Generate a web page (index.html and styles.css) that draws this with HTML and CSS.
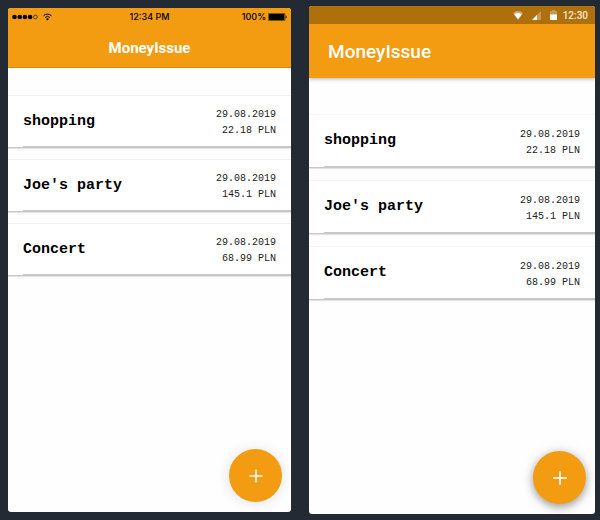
FILE: index.html
```html
<!DOCTYPE html>
<html lang="en">
<head>
<meta charset="utf-8">
<meta name="viewport" content="width=device-width, initial-scale=1">
<title>MoneyIssue</title>
<link rel="stylesheet" href="styles.css">
</head>
<body>
<main class="stage">
  <section class="phone ios" aria-label="iOS">
    <header class="bar">
      <div class="status">
        <span class="status-left">
          <svg width="27" height="6" viewBox="0 0 27 6" aria-hidden="true"><circle cx="2.5" cy="3" r="2.3"/><circle cx="7.7" cy="3" r="2.3"/><circle cx="12.9" cy="3" r="2.3"/><circle cx="18.1" cy="3" r="2.3"/><circle cx="23.4" cy="3" r="1.9" fill="none" stroke="#000" stroke-width=".6"/></svg>
          <svg width="9" height="8" viewBox="0 0 9 8" aria-hidden="true"><g fill="none" stroke="#000" stroke-width="1"><path d="M.5 2.8a5.7 5.7 0 0 1 8 0"/><path d="M2 4.6a3.5 3.5 0 0 1 5 0"/></g><path d="M4.5 7.5 3 5.9a2.1 2.1 0 0 1 3 0z"/></svg>
        </span>
        <span class="status-time">12:34 PM</span>
        <span class="status-right">100%
          <svg width="19" height="8" viewBox="0 0 19 8" aria-hidden="true"><rect x=".3" y=".3" width="16.6" height="7.4" rx="1" fill="none" stroke="#000" stroke-width=".6"/><rect x="1" y="1" width="15.2" height="6" rx=".5"/><path d="M17.6 2.6q1 .3 1 1.4t-1 1.4z"/></svg>
        </span>
      </div>
      <h1 class="title">MoneyIssue</h1>
    </header>
    <ul class="list">
      <li class="card"><div class="row"><span class="name">shopping</span><span class="info"><time>29.08.2019</time><span>22.18 PLN</span></span></div></li>
      <li class="card"><div class="row"><span class="name">Joe's party</span><span class="info"><time>29.08.2019</time><span>145.1 PLN</span></span></div></li>
      <li class="card"><div class="row"><span class="name">Concert</span><span class="info"><time>29.08.2019</time><span>68.99 PLN</span></span></div></li>
    </ul>
    <button class="fab" type="button" aria-label="Add"><svg width="14" height="14" viewBox="0 0 14 14" aria-hidden="true"><path d="M7 .5v13M.5 7h13" stroke="#fff" stroke-width="1.6"/></svg></button>
  </section>

  <section class="phone android" aria-label="Android">
    <header class="bar">
      <div class="status">
        <svg width="10" height="9" viewBox="0 0 10 9" aria-hidden="true"><path d="M5 8.5 0 2a8 8 0 0 1 10 0z" fill="#fff" opacity=".4"/><path d="M5 8.5 1.2 3.4a6.5 6.5 0 0 1 7.6 0z" fill="#fff"/></svg>
        <svg width="9" height="9" viewBox="0 0 9 9" aria-hidden="true"><path d="M9 0v9H0z" fill="#fff" opacity=".3"/><path d="M5 4v5H0z" fill="#fff"/></svg>
        <svg width="7" height="10" viewBox="0 0 7 10" aria-hidden="true"><path d="M0 1h2V0h3v1h2v4H0z" fill="#fff" opacity=".3"/><path d="M0 4.5h7V10H0z" fill="#fff"/></svg>
        <span class="status-time">12:30</span>
      </div>
      <h1 class="title">MoneyIssue</h1>
    </header>
    <ul class="list">
      <li class="card"><div class="row"><span class="name">shopping</span><span class="info"><time>29.08.2019</time><span>22.18 PLN</span></span></div></li>
      <li class="card"><div class="row"><span class="name">Joe's party</span><span class="info"><time>29.08.2019</time><span>145.1 PLN</span></span></div></li>
      <li class="card"><div class="row"><span class="name">Concert</span><span class="info"><time>29.08.2019</time><span>68.99 PLN</span></span></div></li>
    </ul>
    <button class="fab" type="button" aria-label="Add"><svg width="14" height="14" viewBox="0 0 14 14" aria-hidden="true"><path d="M7 0v14M0 7h14" stroke="#fff" stroke-width="1.6"/></svg></button>
  </section>
</main>
</body>
</html>
```
FILE: styles.css
```css
* { box-sizing: border-box; }

body {
  margin: 0;
  background: #232a34;
  font-family: Roboto, "Liberation Sans", sans-serif;
}

.stage {
  display: flex;
  gap: 18px;
  min-height: 100vh;
  padding: 6px 5px 6px 8px;
}

.phone {
  position: relative;
  background: #fefefe;
  border-radius: 3px;
  overflow: hidden;
}

.ios {
  flex: 99;
  margin: 2px 0;
}

.android { flex: 100; }

.bar { background: #f39c12; }
.title { margin: 0; color: #fff; }

.ios .bar {
  height: 60px;
  border-bottom: 1px solid #d88a10;
}

.ios .status {
  display: grid;
  grid-template-columns: 1fr auto 1fr;
  align-items: center;
  height: 18px;
  padding: 0 4px;
  font: 500 9px/18px Inter, sans-serif;
  color: #000;
}

.status-left,
.status-right {
  display: flex;
  align-items: center;
  gap: 4px;
}

.status-right {
  justify-content: flex-end;
  gap: 2px;
}

.ios .title {
  font-size: 15px;
  font-weight: 700;
  line-height: 44px;
  text-align: center;
}

.android .bar {
  height: 72px;
  box-shadow: 0 1px 4px rgba(0, 0, 0, .3);
}

.android .status {
  display: flex;
  align-items: center;
  justify-content: flex-end;
  gap: 9px;
  height: 18px;
  padding-right: 7px;
  background: #ae6f0d;
}

.android .status-time {
  margin-left: -3px;
  color: #f7ead6;
  font-size: 10px;
  font-weight: 500;
}

.android .title {
  padding-left: 19px;
  font-size: 19px;
  font-weight: 500;
  line-height: 56px;
}

.list {
  display: grid;
  gap: 11px;
  margin: 0;
  padding: 27px 0 0;
  list-style: none;
}

.android .list {
  gap: 12px;
  padding-top: 36px;
}

.card {
  padding-left: 15px;
  background: #fff;
  border-top: 1px solid #f0f0f0;
  border-bottom: 1px solid #c8c8c8;
  box-shadow: 0 1px 1px rgba(0, 0, 0, .1);
}

.android .card { border-top-color: #f6f6f6; }

.row {
  display: flex;
  align-items: center;
  justify-content: space-between;
  height: 51px;
  padding-right: 15px;
  border-bottom: 1px solid #c8c8c8;
  font-family: "Liberation Mono", "Courier New", monospace;
}

.android .row { height: 52px; }

.name {
  color: #000;
  font-size: 15px;
  font-weight: 700;
}

.info {
  display: grid;
  padding-top: 4px;
  color: #222;
  font-size: 10px;
  line-height: 16px;
  text-align: right;
}

.fab {
  position: absolute;
  right: 9px;
  bottom: 10px;
  display: grid;
  place-items: center;
  width: 53px;
  height: 53px;
  padding: 0;
  border: 0;
  border-radius: 50%;
  background: #f39c12;
  box-shadow: 0 1px 14px rgba(0, 0, 0, .12);
}

.android .fab { box-shadow: 0 3px 8px rgba(0, 0, 0, .36), 0 0 16px rgba(0, 0, 0, .08); }
```
